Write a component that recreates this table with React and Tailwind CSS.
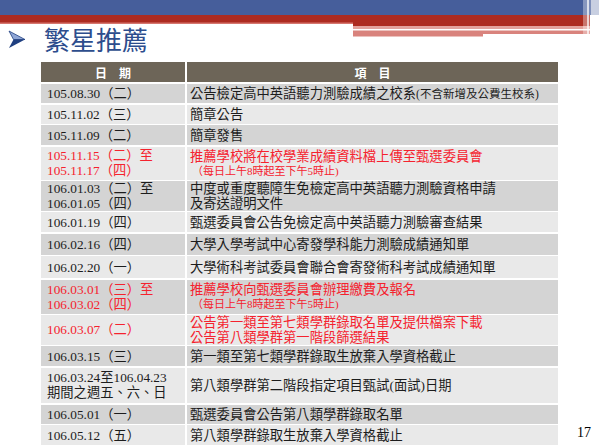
import React from 'react';

// 表格資料：shade 'd' 深灰 / 'l' 淺灰，red 表示紅字列
const rows = [
  { h: 19, shade: 'd', date: ['105.08.30（二）'], item: ['公告檢定高中英語聽力測驗成績之校系'], note: '(不含新增及公費生校系)' },
  { h: 19, shade: 'l', date: ['105.11.02（三）'], item: ['簡章公告'] },
  { h: 20, shade: 'd', date: ['105.11.09（二）'], item: ['簡章發售'] },
  { h: 33, shade: 'l', red: true, date: ['105.11.15（二）至', '105.11.17（四）'], item: ['推薦學校將在校學業成績資料檔上傳至甄選委員會'], sub: '（每日上午8時起至下午5時止)' },
  { h: 29.5, shade: 'd', date: ['106.01.03（二）至', '106.01.05（四）'], item: ['中度或重度聽障生免檢定高中英語聽力測驗資格申請', '及寄送證明文件'] },
  { h: 20, shade: 'l', date: ['106.01.19（四）'], item: ['甄選委員會公告免檢定高中英語聽力測驗審查結果'] },
  { h: 21, shade: 'd', date: ['106.02.16（四）'], item: ['大學入學考試中心寄發學科能力測驗成績通知單'] },
  { h: 22, shade: 'l', date: ['106.02.20（一）'], item: ['大學術科考試委員會聯合會寄發術科考試成績通知單'] },
  { h: 34, shade: 'd', red: true, date: ['106.03.01（三）至', '106.03.02（四）'], item: ['推薦學校向甄選委員會辦理繳費及報名'], sub: '（每日上午8時起至下午5時止)' },
  { h: 29.5, shade: 'l', red: true, date: ['106.03.07（二）'], item: ['公告第一類至第七類學群錄取名單及提供檔案下載', '公告第八類學群第一階段篩選結果'] },
  { h: 20, shade: 'd', date: ['106.03.15（三）'], item: ['第一類至第七類學群錄取生放棄入學資格截止'] },
  { h: 35.5, shade: 'l', date: ['106.03.24至106.04.23', '期間之週五、六、日'], item: ['第八類學群第二階段指定項目甄試(面試)日期'] },
  { h: 19, shade: 'd', date: ['106.05.01（一）'], item: ['甄選委員會公告第八類學群錄取名單'] },
  { h: 20, shade: 'l', date: ['106.05.12（五）'], item: ['第八類學群錄取生放棄入學資格截止'] },
];

function Banner() {
  return (
    <svg className="absolute inset-0" width="599" height="37" viewBox="0 0 599 37">
      <rect x="0" y="0" width="599" height="15" fill="#465e9b" />
      <rect x="0" y="15" width="353" height="9" fill="#ad2b20" />
      <rect x="0" y="22.5" width="353" height="1.5" fill="#d6766e" />
      <rect x="353" y="15" width="237" height="11" fill="#ad2b20" />
      <rect x="353" y="26" width="237" height="3" fill="#e3a29c" />
      <rect x="353" y="29" width="202" height="1.5" fill="#ffffff" />
      <rect x="353" y="30.5" width="130" height="6" fill="#d9837d" />
      <rect x="483" y="30.5" width="107" height="3.5" fill="#d9837d" />
      <rect x="583" y="0" width="4" height="37" fill="#ffffff" opacity="0.35" />
      <rect x="587" y="0" width="2" height="37" fill="#ffffff" opacity="0.8" />
      <rect x="589" y="0" width="2" height="37" fill="#ffffff" opacity="0.3" />
      <rect x="591" y="0" width="8" height="37" fill="#ffffff" opacity="0.7" />
    </svg>
  );
}

function Arrow() {
  return (
    <svg width="18" height="19" viewBox="0 0 18 19">
      <polygon points="1,1 17,9.5 5.5,9.5" fill="#8fa6d6" stroke="#1f3f80" strokeWidth="0.8" />
      <polygon points="5.5,9.5 17,9.5 1,18" fill="#1f3f80" />
    </svg>
  );
}

export default function App() {
  return (
    <div className="w-[599px] h-[445px] overflow-hidden bg-white font-['Liberation_Serif','Noto_Sans_CJK_TC',serif]">
      <div className="relative h-[62px]">
        <Banner />
        <div className="relative flex items-center pt-[26px] pl-[8px]">
          <Arrow />
          <span className="ml-[18px] text-[26px] leading-[26px] text-[#2d4d8d] font-['Noto_Sans_CJK_TC',sans-serif]">
            繁星推薦
          </span>
        </div>
      </div>

      <div className="flex items-end ml-[41px]">
        <div className="grid grid-cols-[144px_371px] gap-x-[2px] gap-y-[1.5px] text-[13.3px] leading-[15px] text-[#1c1c1c]">
          <div className="h-[20px] mb-[0.5px] bg-[#6d6558] flex items-center justify-center text-white text-[12px] font-bold font-['Noto_Sans_CJK_TC',sans-serif]">
            日　期
          </div>
          <div className="h-[20px] mb-[0.5px] bg-[#6d6558] flex items-center justify-center text-white text-[12px] font-bold font-['Noto_Sans_CJK_TC',sans-serif]">
            項　目
          </div>
          {rows.map((r, i) => {
            const bg = r.shade === 'd' ? 'bg-[#d4d4d4]' : 'bg-[#e9e9e9]';
            const color = r.red ? 'text-[#f5222e]' : '';
            return (
              <React.Fragment key={i}>
                <div className={`${bg} ${color} flex flex-col justify-center pl-[6px] whitespace-nowrap`} style={{ height: r.h }}>
                  {r.date.map((d) => (
                    <span key={d}>{d}</span>
                  ))}
                </div>
                <div className={`${bg} ${color} flex flex-col justify-center pl-[3px] whitespace-nowrap`} style={{ height: r.h }}>
                  {r.item.map((t, j) => (
                    <span key={j}>
                      {t}
                      {r.note && j === 0 && <span className="text-[11.5px]">{r.note}</span>}
                    </span>
                  ))}
                  {r.sub && <span className="text-[11px] leading-[14px] pl-[2px]">{r.sub}</span>}
                </div>
              </React.Fragment>
            );
          })}
        </div>
        <span className="ml-[19px] mb-[5px] text-[14px] leading-[14px] text-black">17</span>
      </div>
    </div>
  );
}
